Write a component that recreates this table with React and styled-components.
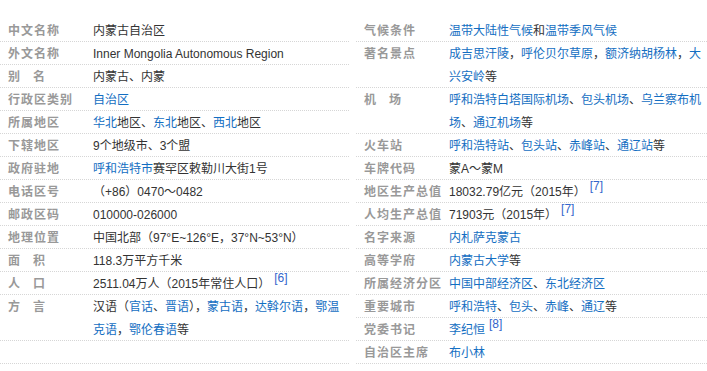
import React from "react";
import styled, { createGlobalStyle } from "styled-components";

const GlobalStyle = createGlobalStyle`
  body {
    margin: 0;
    background: #ffffff;
    font-family: "Liberation Sans", "Noto Sans CJK SC", sans-serif;
  }
`;

// datos de la ficha, cada fila: etiqueta + partes del valor
// parte string = texto normal, {a: ""} = enlace, {sup: ""} = referencia
const left = [
  { label: "中文名称", value: ["内蒙古自治区"] },
  { label: "外文名称", value: ["Inner Mongolia Autonomous Region"] },
  { label: "别名", spread: true, value: ["内蒙古、内蒙"] },
  { label: "行政区类别", value: [{ a: "自治区" }] },
  { label: "所属地区", value: [{ a: "华北" }, "地区、", { a: "东北" }, "地区、", { a: "西北" }, "地区"] },
  { label: "下辖地区", value: ["9个地级市、3个盟"] },
  { label: "政府驻地", value: [{ a: "呼和浩特市" }, "赛罕区敕勒川大街1号"] },
  { label: "电话区号", value: ["（+86）0470～0482"] },
  { label: "邮政区码", value: ["010000-026000"] },
  { label: "地理位置", value: ["中国北部（97°E~126°E，37°N~53°N）"] },
  { label: "面积", spread: true, value: ["118.3万平方千米"] },
  { label: "人口", spread: true, value: ["2511.04万人（2015年常住人口）", { sup: "[6]" }] },
  {
    label: "方言",
    spread: true,
    value: [
      "汉语（", { a: "官话" }, "、", { a: "晋语" }, "），", { a: "蒙古语" }, "，",
      { a: "达斡尔语" }, "，", { a: "鄂温克语" }, "，", { a: "鄂伦春语" }, "等",
    ],
  },
  { label: "", value: [] },
];

const right = [
  { label: "气候条件", value: [{ a: "温带大陆性气候" }, "和", { a: "温带季风气候" }] },
  {
    label: "著名景点",
    value: [{ a: "成吉思汗陵" }, "，", { a: "呼伦贝尔草原" }, "，", { a: "额济纳胡杨林" }, "，", { a: "大兴安岭" }, "等"],
  },
  {
    label: "机场",
    spread: true,
    value: [{ a: "呼和浩特白塔国际机场" }, "、", { a: "包头机场" }, "、", { a: "乌兰察布机场" }, "、", { a: "通辽机场" }, "等"],
  },
  {
    label: "火车站",
    value: [{ a: "呼和浩特站" }, "、", { a: "包头站" }, "、", { a: "赤峰站" }, "、", { a: "通辽站" }, "等"],
  },
  { label: "车牌代码", value: ["蒙A～蒙M"] },
  { label: "地区生产总值", value: ["18032.79亿元（2015年）", { sup: "[7]" }] },
  { label: "人均生产总值", value: ["71903元（2015年）", { sup: "[7]" }] },
  { label: "名字来源", value: [{ a: "内札萨克蒙古" }] },
  { label: "高等学府", value: [{ a: "内蒙古大学" }, "等"] },
  { label: "所属经济分区", value: [{ a: "中国中部经济区" }, "、", { a: "东北经济区" }] },
  {
    label: "重要城市",
    value: [{ a: "呼和浩特" }, "、", { a: "包头" }, "、", { a: "赤峰" }, "、", { a: "通辽" }, "等"],
  },
  { label: "党委书记", value: [{ a: "李纪恒" }, { sup: "[8]" }] },
  { label: "自治区主席", value: [{ a: "布小林" }] },
];

const renderPart = (part, i) => {
  if (typeof part === "string") return <React.Fragment key={i}>{part}</React.Fragment>;
  if (part.sup) return <Sup key={i}>{part.sup}</Sup>;
  return (
    <Link key={i} href="#">
      {part.a}
    </Link>
  );
};

const InfoColumn = ({ items, width, offset }) => (
  <Column $width={width} $offset={offset}>
    {items.map((item, i) => (
      <Row key={i}>
        <Label $spread={item.spread}>{item.label}</Label>
        <Value>{item.value.map(renderPart)}</Value>
      </Row>
    ))}
  </Column>
);

const App = () => {
  return (
    <>
      <GlobalStyle />
      <InfoBox>
        <InfoColumn items={left} width={350} offset={0} />
        <InfoColumn items={right} width={351} offset={6} />
      </InfoBox>
    </>
  );
};

const InfoBox = styled.div`
  display: flex;
  align-items: flex-start;
  padding-top: 20px;
  width: 707px;
`;

const Column = styled.div`
  display: flex;
  flex-direction: column;
  width: ${(p) => p.$width}px;
  margin-left: ${(p) => p.$offset}px;
  flex-shrink: 0;
`;

const Row = styled.div`
  display: flex;
  align-items: flex-start;
  line-height: 23px;
  font-size: 12px;
  background-image: linear-gradient(to right, #d6d6d6 50%, transparent 50%);
  background-size: 2px 1px;
  background-repeat: repeat-x;
  background-position: left 0 bottom 1px;
`;

const Label = styled.div`
  width: 93px;
  height: 23px;
  box-sizing: border-box;
  padding-left: 8px;
  flex-shrink: 0;
  white-space: nowrap;
  font-family: "Liberation Sans", "Noto Sans CJK SC", sans-serif;
  font-weight: bold;
  font-size: 12px;
  color: #999999;
  letter-spacing: ${(p) => (p.$spread ? "13px" : "1px")};
`;

const Value = styled.div`
  flex: 1;
  min-width: 0;
  min-height: 23px;
  color: #333333;
  font-size: 12px;
`;

const Link = styled.a`
  color: #136ec2;
  text-decoration: none;
`;

const Sup = styled.span`
  position: relative;
  top: -6px;
  margin-left: 4px;
  font-size: 12px;
  line-height: 0;
  color: #3366cc;
`;

export default App;
